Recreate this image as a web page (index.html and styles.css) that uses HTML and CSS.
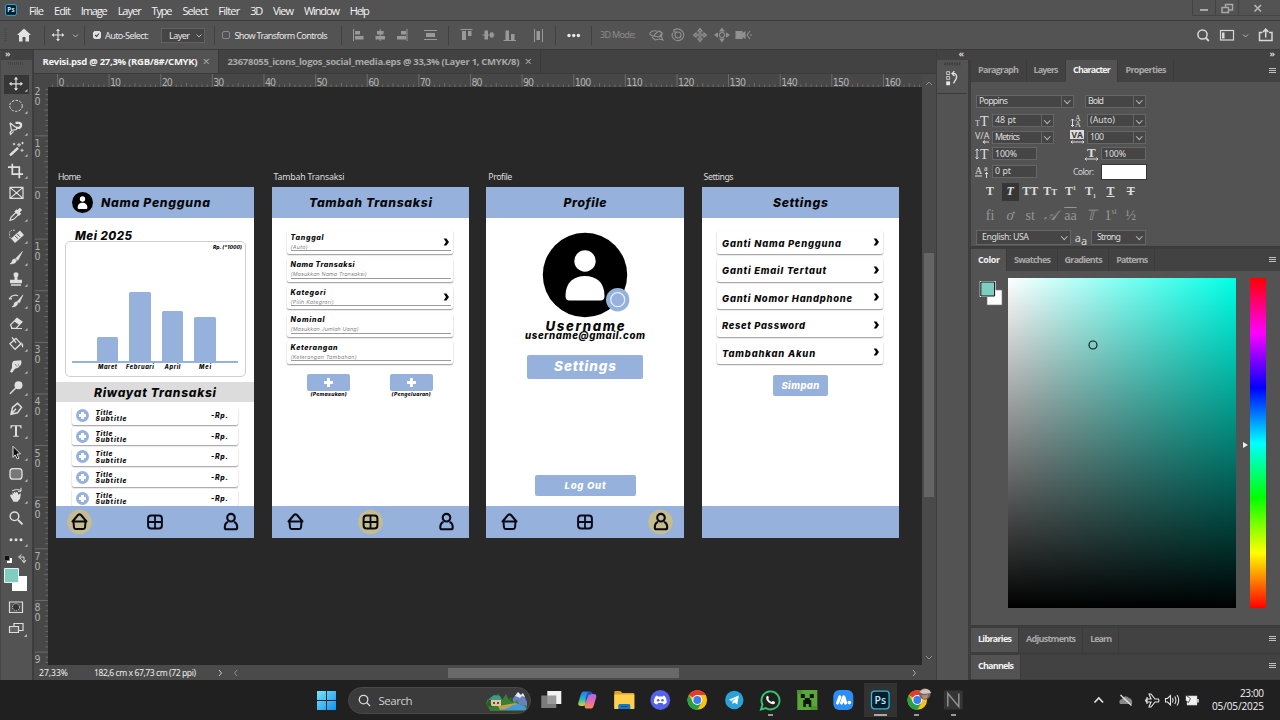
FILE: index.html
```html
<!DOCTYPE html>
<html lang="en">
<head>
<meta charset="utf-8">
<title>Revisi.psd</title>
<link rel="stylesheet" href="styles.css">
</head>
<body>
<svg width="0" height="0" class="defs">
  <defs>
    <g id="corner"><path d="M11.500 8V5.200L8.700 8z" fill="#bdbdbd"/></g>
    <g id="move" fill="none" stroke="#e0e0e0" stroke-width="1.200"><path d="M0-6V6M-6 0H6"/><path d="M0-7l2.200 2.600h-4.400zM0 7l2.200-2.600h-4.400zM-7 0l2.600-2.200v4.400zM7 0l-2.600-2.200v4.400z" fill="#e0e0e0" stroke="none"/></g>
    <g id="person"><circle cx="0" cy="-14" r="10.700"/><path d="M-19.500 21C-19.500 7-11 1 0 1s19.500 6 19.500 20c0 3-1.500 4.500-4 4.500h-31c-2.500 0-4-1.500-4-4.500z"/></g>
    <g id="nav-home" fill="none" stroke="#0a0a14" stroke-width="2" stroke-linejoin="round" stroke-linecap="round"><path d="M-7 0L-1.500-6.500q1.500-1.300 3 0L7 0zM-6 .5l.5 5.300q.3 1.700 2 1.700h7q1.700 0 2-1.700L6 .5"/></g>
    <g id="nav-add" fill="none" stroke="#0a0a14" stroke-width="2"><rect x="-6.900" y="-6.500" width="13.800" height="13" rx="3"/><path d="M0-6V6M-6.500 0H6.500" stroke-width="1.800"/></g>
    <g id="nav-user" fill="none" stroke="#0a0a14" stroke-width="2.100" stroke-linejoin="round"><circle cx="0" cy="-3.800" r="3.800"/><path d="M-3 .6C-5.500 1.400-6.200 3.700-6.200 6q0 1.800 1.700 1.800h9q1.700 0 1.700-1.800C6.200 3.700 5.500 1.400 3 .6"/></g>
    <g id="chev"><path d="M-2.300-3.500H.4L3 0 .4 3.500h-2.700L0 0z" fill="#050505"/></g>
    <g id="chrome"><circle r="9.800" fill="#fbc116"/><path d="M0 0L-8.500-4.900A9.800 9.800 0 0 1 8.500-4.900H0z" fill="#e33b2e"/><path d="M-8.500-4.900A9.800 9.800 0 0 0 0 9.800L4.500 2.200-4.200 2.400z" fill="#27a148"/><circle r="5" fill="#fff"/><circle r="3.900" fill="#3b7de9"/></g>
    <linearGradient id="win" x1="0" y1="0" x2="1" y2="1"><stop offset="0" stop-color="#7be2fb"/><stop offset="1" stop-color="#0d94ee"/></linearGradient>
    <linearGradient id="cop1" x1="0" y1="0" x2="0" y2="1"><stop offset="0" stop-color="#2a76e8"/><stop offset=".5" stop-color="#22b4c4"/><stop offset="1" stop-color="#dcd336"/></linearGradient>
    <linearGradient id="cop2" x1="0" y1="0" x2="0" y2="1"><stop offset="0" stop-color="#a06af0"/><stop offset=".5" stop-color="#e967b1"/><stop offset="1" stop-color="#f5924a"/></linearGradient>
  </defs>
</svg>

<header class="menubar">
  <svg class="pslogo" viewBox="0 0 12 12"><rect x=".6" y=".6" width="10.800" height="10.800" rx="1.500" fill="#001d2b" stroke="#35a8d0" stroke-width="1"/><text x="6" y="8.400" text-anchor="middle" font-size="6.500" font-weight="700" fill="#bfe8fa">Ps</text></svg>
  <nav class="menus">
    <span data-w="15">File</span><span data-w="17">Edit</span><span data-w="27">Image</span><span data-w="24">Layer</span><span data-w="21">Type</span><span data-w="26">Select</span><span data-w="22">Filter</span><span data-w="13">3D</span><span data-w="21">View</span><span data-w="36">Window</span><span data-w="20">Help</span>
  </nav>
  <svg class="winctl" viewBox="0 0 88 20"><path d="M.5 0v15.500H88M23.500 0v15M46.500 0v15" stroke="#444" fill="none"/><path d="M8 10h8" stroke="#a8a8a8" stroke-width="2"/><g fill="#535353" stroke="#a8a8a8" stroke-width="1.500"><rect x="33.500" y="4.500" width="7" height="5.500"/><rect x="30" y="7.500" width="6.500" height="5"/></g><path d="M62.500 5l6.500 6.500M69 5l-6.500 6.500" stroke="#b4b4b4" stroke-width="1.700"/></svg>
</header>

<div class="options">
  <svg class="opt-left" viewBox="0 0 85 28"><path d="M5.500 7v14" stroke="#464646" stroke-dasharray="1 1" stroke-width="2"/><path d="M24 7.500l7 6.500h-2v6.500h-3.500V16h-3v4.500H19V14h-2z" fill="#e2e2e2"/><path d="M44.500 5v19M84.500 5v19" stroke="#414141"/><use href="#move" transform="translate(58 14) scale(.9)"/><path d="M73 13.500l2.500 2.500 2.500-2.500" stroke="#b5b5b5" fill="none"/></svg>
  <i class="check on"><svg viewBox="0 0 8 8"><path d="M1.500 4l2 2 3-4" fill="none" stroke="#3a3a3a" stroke-width="1.500"/></svg></i>
  <span class="auto" data-w="44">Auto-Select:</span>
  <span class="select layer"><b data-w="21">Layer</b><svg viewBox="0 0 8 6"><path d="M1.500 1.500L4 4l2.500-2.500" fill="none" stroke="#b5b5b5"/></svg></span>
  <i class="bar"></i>
  <i class="check"></i>
  <span class="auto" data-w="93">Show Transform Controls</span>
  <svg class="opt-align" viewBox="341 0 253 28"><g stroke="#414141"><path d="M341.500 5v19M448.500 5v19M555.500 5v19M591.500 5v19"/></g><g fill="#999"><path d="M353 8h1v12h-1zM355 10h5v3.500h-5zM355 15h8.500v3.500H355z"/><path d="M379.700 8h1v12h-1zM377 10h6.500v3.500H377zM375.500 15H385v3.500h-9.500z"/><path d="M406.500 8h1v12h-1zM401 10h5v3.500h-5zM397 15h9v3.500h-9z"/><path d="M424 9h13v1h-13zM426 12h9v4h-9zM424 18h13v1h-13z"/><path d="M460.500 8h12v1h-12zM462 10h4v9h-4zM468 10h3.500v5H468z"/><path d="M482.500 13.500h12v1h-12zM484.500 9.500h3.500v9h-3.500zM490 11.500h3.500v5H490z"/><path d="M503.500 19H516v1h-12.500zM505.500 9.500h3.500V19h-3.500zM511 13h3.500v6H511z"/><path d="M534 8h1v13h-1zM542 8h1v13h-1zM536.500 10h3.500v9h-3.500z"/></g><g fill="#e8e8e8"><circle cx="569" cy="14.500" r="1.700"/><circle cx="573.700" cy="14.500" r="1.700"/><circle cx="578.400" cy="14.500" r="1.700"/></g></svg>
  <span class="mode" data-w="36">3D Mode:</span>
  <svg class="opt-3d" viewBox="644 0 112 28" fill="none" stroke="#919191" stroke-width="1.100"><path d="M654 15q-5-1-4-3 2-3 7-2M659 10q4 1 3 4-1 2-4 2M652 16l3 3 5-1 3 1-2-4M655 13l4-3 3 2-3 4-5-1z"/><circle cx="678" cy="14" r="3"/><path d="M674 9q5-3 9 2 2 4-1 7-5 4-9-1-2-3 0-5M674 8v3h3"/><path d="M700 7.500l2 2.500h-1.200v3.200h3.200V12l2.500 2-2.500 2v-1.200h-3.200V18h1.200l-2 2.500-2-2.500h1.200v-3.200H696V16l-2.500-2 2.500-2v1.200h3.200V10H698z"/><circle cx="722" cy="14" r="2.500"/><path d="M722 7.500l1.800 2.500h-3.600zM722 20.500l1.800-2.500h-3.600zM715 14l2.500-1.800v3.600zM729 14l-2.500-1.800v3.600z" fill="#919191"/><path d="M736 10.500h6v7h-6zM742 13l3-2v6l-3-2z" fill="#919191"/><path d="M750 10l-3 4 3 4M751 13v2"/></svg>
  <svg class="opt-right" viewBox="1190 0 90 28" fill="none" stroke="#d8d8d8"><circle cx="1202.500" cy="13.500" r="4.600" stroke-width="1.500"/><path d="M1205.800 17l3 3" stroke-width="1.800"/><rect x="1220.500" y="9.500" width="13" height="9.500" stroke-width="1.200"/><path d="M1222 11.500h2.500v6h-2.500z" fill="#d8d8d8" stroke="none"/><path d="M1243 13.500l2.500 2.500 2.500-2.500" stroke="#b5b5b5"/><path d="M1262.500 11.500h-3v8h12.500v-8h-3M1265.700 16.500V8.500m-2.700 2.500l2.700-2.800 2.700 2.800" stroke-width="1.500"/></svg>
</div>

<main class="workspace">
  <aside class="toolbox">
    <div class="strip">»</div>
    <div class="grip"></div>
    <div class="tools">
      <svg class="active" viewBox="-16 -10.800 32 21.600"><use href="#move"/><use href="#corner"/></svg>
      <svg viewBox="-16 -10.800 32 21.600"><ellipse rx="6.300" ry="5.500" fill="none" stroke="#d8d8d8" stroke-dasharray="2.500 1.300"/><use href="#corner"/></svg>
      <svg viewBox="-16 -10.800 32 21.600"><path d="M-6-5l4.500 3.500L2 .5M-6-5l1.500 7.500L1 1.500M-4.500 3q-2 1-1 3.500l3-3" fill="none" stroke="#d8d8d8" stroke-width="1.300"/><path d="M-.5-5h3.500q2.500.5 2 2.800T2 0H0" fill="none" stroke="#e0e0e0" stroke-width="2.300"/><use href="#corner"/></svg>
      <svg viewBox="-16 -10.800 32 21.600"><path d="M-6 6.500L2-1" stroke="#e0e0e0" stroke-width="2.600"/><path d="M3-6v4M1-4h4M6 0v3M4.500 1.500h3M-2-6v2.500M-3.200-4.800h2.500M6.500-7v2.500M5.300-5.800h2.500" stroke="#d8d8d8"/><use href="#corner"/></svg>
      <svg viewBox="-16 -10.800 32 21.600"><path d="M-8-3.700H3.300V7.500M-3.700-7V3.300H7" fill="none" stroke="#e0e0e0" stroke-width="1.700"/><use href="#corner"/></svg>
      <svg viewBox="-16 -10.800 32 21.600"><path d="M-6-5.500H7v11H-6zM-6-5.500L7 5.500M7-5.500L-6 5.500" fill="none" stroke="#e0e0e0" stroke-width="1.200"/></svg>
      <svg viewBox="-16 -10.800 32 21.600"><path d="M-6 6.500l1-3L1-2.500 3.500 0-2.500 5.500z" fill="none" stroke="#e0e0e0" stroke-width="1.200"/><path d="M-.5-3.500l4.500 4.500M2-2l3-3" stroke="#e0e0e0" stroke-width="3.200"/><use href="#corner"/></svg>
      <svg viewBox="-16 -10.800 32 21.600"><path d="M-3 5L6-3" stroke="#e0e0e0" stroke-width="6"/><path d="M-1 0l3 3M1-2l3 3" stroke="#555"/><path d="M-1-5.500q-6-1-5.500 4.500t3 3" fill="none" stroke="#d0d0d0" stroke-dasharray="1.500 1"/><use href="#corner"/></svg>
      <svg viewBox="-16 -10.800 32 21.600"><path d="M-6 6q2.500-1 2.500-4 2-2 4 .500Q0 6.500-6 6zM-.5 1L6.500-6.500 2 2.500z" fill="#e0e0e0" stroke="#e0e0e0" stroke-width=".5"/><use href="#corner"/></svg>
      <svg viewBox="-16 -10.800 32 21.600"><path d="M-2.500-5a2.700 2.700 0 0 1 5 0q0 2-1 3.500V1H6v3.500H-6V1h4.500v-2.500Q-2.500-3-2.500-5zM-5 5.500H5v1.300H-5z" fill="#e0e0e0"/><use href="#corner"/></svg>
      <svg viewBox="-16 -10.800 32 21.600"><path d="M-4 6q2.500-1 2.500-4 2-2 3.500 0Q1 6.500-4 6zM1 1L7-6 3.500 2z" fill="#e0e0e0" stroke="#e0e0e0" stroke-width=".5"/><path d="M-7-2l3-3M-7-2h3M2-5q-4-2-8 2" fill="none" stroke="#d8d8d8" stroke-width="1.200"/><use href="#corner"/></svg>
      <svg viewBox="-16 -10.800 32 21.600"><path d="M-5.500 2L1-4.500 6-1 0 5.500h-4z" fill="none" stroke="#e0e0e0" stroke-width="1.200"/><path d="M-2-1.500L1-4.500 6-1 3 2z" fill="#e0e0e0"/><path d="M-5 5.700H6" stroke="#e0e0e0"/><use href="#corner"/></svg>
      <svg viewBox="-16 -10.800 32 21.600"><path d="M-6 0L0-5.500 5 0-1 5.500zM-4-6.500L0-1" fill="none" stroke="#e0e0e0" stroke-width="1.300"/><path d="M5.500-2q2.500 3 1.500 6-2-1-1.500-6z" fill="#e0e0e0"/><use href="#corner"/></svg>
      <svg viewBox="-16 -10.800 32 21.600"><path d="M-4-1q0-4 3-4l6-.500q1 1 0 4.500L2 2l-3 1-3 4-2-1 2-4z" fill="#e0e0e0"/><path d="M-1-2l2 3M2-2l1 2" stroke="#666" stroke-width=".7"/><use href="#corner"/></svg>
      <svg viewBox="-16 -10.800 32 21.600"><circle cx="2.500" cy="-2.500" r="4" fill="#e0e0e0"/><path d="M-6 6L0 0" stroke="#e0e0e0" stroke-width="1.500"/><use href="#corner"/></svg>
      <svg viewBox="-16 -10.800 32 21.600"><path d="M-5 5.500l1.500-7 5-4 4 4-4 5.500zM-5 5.500L0 0M1-6l5 5" fill="none" stroke="#e0e0e0" stroke-width="1.500"/><use href="#corner"/></svg>
      <svg viewBox="-16 -10.800 32 21.600"><path d="M-5.500-5.500h11v3.200H4.700Q4.500-4.500 2.800-4.500H1V5h1.800v1h-5.600V5H-1v-9.500h-1.800q-1.700 0-1.900 2.200h-.8z" fill="#e0e0e0"/><use href="#corner"/></svg>
      <svg viewBox="-16 -10.800 32 21.600"><path d="M-3-6.500L4.500 1 1 1.300l2 4-1.800.8-2-4L-3 4.500z" fill="#111" stroke="#e0e0e0"/><use href="#corner"/></svg>
      <svg viewBox="-16 -10.800 32 21.600"><rect x="-6" y="-5.200" width="12" height="10.500" rx="3" fill="#777" stroke="#e0e0e0" stroke-width="1.300"/><use href="#corner"/></svg>
      <svg viewBox="-16 -10.800 32 21.600"><path d="M-5-1.500l1.500 1V-3.500L-2-2v-2l2 1 0-1 2 1v2L5-2.500 4 3 1.500 6h-4L-6 0z" fill="#e0e0e0"/><path d="M-4-5Q0-7.500 5-5.500M5-8v3.500H2" fill="none" stroke="#e0e0e0"/><use href="#corner"/></svg>
      <svg viewBox="-16 -10.800 32 21.600"><circle cx="-1.500" cy="-1.500" r="4.300" fill="none" stroke="#e0e0e0" stroke-width="1.400"/><path d="M2 2l4.500 4.500" stroke="#e0e0e0" stroke-width="2"/></svg>
      <svg viewBox="-16 -10.800 32 21.600"><g fill="#e0e0e0"><circle cx="-5" cy="1" r="1.500"/><circle cy="1" r="1.500"/><circle cx="5" cy="1" r="1.500"/></g><use href="#corner"/></svg>
    </div>
    <svg class="swatchset" viewBox="0 550 32 90"><path d="M7 558h5v5H7z" fill="#fff"/><path d="M4.500 555.500h5v5h-5z" fill="#111" stroke="#777" stroke-width=".6"/><path d="M20 557h4v5M21.500 554.500l-3 2.500 3 2.500M22 560l2 3 2-3" fill="none" stroke="#ddd"/><path d="M12 576h15v15H12z" fill="#fff"/><path d="M4.500 568.500h14v14h-14z" fill="#7fccc0" stroke="#eee"/><path d="M9.500 602h13v10.500h-13z" fill="none" stroke="#ddd" stroke-width="1.200"/><circle cx="16" cy="607.200" r="3.500" fill="#333" stroke="#ddd" stroke-dasharray="1.200 1"/><path d="M14 623.500h9v7h-9z" fill="#535353" stroke="#ddd" stroke-width="1.200"/><path d="M9.500 626.500h9v6h-9z" fill="#656565" stroke="#ddd" stroke-width="1.200"/><path d="M27 637v-3l-3 3z" fill="#bdbdbd"/></svg>
  </aside>

  <section class="document">
    <div class="tabs">
      <span class="tab current"><b data-w="155">Revisi.psd @ 27,3% (RGB/8#/CMYK)</b><em>×</em></span>
      <span class="tab"><b data-w="292">23678055_icons_logos_social_media.eps @ 33,3% (Layer 1, CMYK/8)</b><em>×</em></span>
    </div>
    <div class="view">
      <svg class="ruler-h" id="rulerH" viewBox="34 74 888 13"></svg>
      <svg class="ruler-v" id="rulerV" viewBox="34 87 14 578"></svg>
      <div class="canvas">
        <article class="board" id="home">
          <h2 data-w="23">Home</h2>
          <div class="screen">
            <div class="top user"><svg viewBox="-42 -42 84 84"><circle r="42"/><use href="#person" fill="#fff"/></svg><b data-w="109">Nama Pengguna</b></div>
            <b class="month" data-w="57">Mei 2025</b>
            <div class="chart">
              <b class="unit" data-w="29">Rp. (*1000)</b>
              <div class="bars"><i style="height:24px"></i><i style="height:69px"></i><i style="height:50px"></i><i style="height:44px"></i></div>
              <div class="months"><span><b data-w="19">Maret</b></span><span><b data-w="28">Februari</b></span><span><b data-w="16">April</b></span><span><b data-w="12">Mei</b></span></div>
            </div>
            <div class="history"><b data-w="122">Riwayat Transaksi</b></div>
            <ul class="rows">
              <li><i class="plus"></i><div><b data-w="17">Title</b><b data-w="31">Subtitle</b></div><b class="amt" data-w="17">-Rp.</b></li>
              <li><i class="plus"></i><div><b data-w="17">Title</b><b data-w="31">Subtitle</b></div><b class="amt" data-w="17">-Rp.</b></li>
              <li><i class="plus"></i><div><b data-w="17">Title</b><b data-w="31">Subtitle</b></div><b class="amt" data-w="17">-Rp.</b></li>
              <li><i class="plus"></i><div><b data-w="17">Title</b><b data-w="31">Subtitle</b></div><b class="amt" data-w="17">-Rp.</b></li>
              <li><i class="plus"></i><div><b data-w="17">Title</b><b data-w="31">Subtitle</b></div><b class="amt" data-w="17">-Rp.</b></li>
            </ul>
            <svg class="nav" viewBox="0 0 198 32"><circle cx="23.500" cy="16" r="12.300" fill="#c3bd91"/><use href="#nav-home" x="23.500" y="15.500"/><use href="#nav-add" x="99" y="16"/><use href="#nav-user" x="175" y="15.500"/></svg>
          </div>
        </article>

        <article class="board" id="add">
          <h2 data-w="71">Tambah Transaksi</h2>
          <div class="screen">
            <div class="top"><b data-w="123">Tambah Transaksi</b></div>
            <div class="cards">
              <div class="card"><b data-w="33">Tanggal</b><small data-w="17">(Auto)</small><svg viewBox="-4 -5 8 10"><use href="#chev"/></svg></div>
              <div class="card"><b data-w="64">Nama Transaksi</b><small data-w="76">(Masukkan Nama Transaksi)</small></div>
              <div class="card"><b data-w="35">Kategori</b><small data-w="43">(Pilih Kategrori)</small><svg viewBox="-4 -5 8 10"><use href="#chev"/></svg></div>
              <div class="card"><b data-w="34">Nominal</b><small data-w="68">(Masukkan Jumlah Uang)</small></div>
              <div class="card"><b data-w="47">Keterangan</b><small data-w="66">(Keterangan Tambahan)</small></div>
            </div>
            <div class="choices">
              <div><i class="cross"></i><b data-w="36">(Pemasukan)</b></div>
              <div><i class="cross"></i><b data-w="39">(Pengeluaran)</b></div>
            </div>
            <svg class="nav" viewBox="0 0 198 32"><circle cx="98.500" cy="16" r="12.300" fill="#c3bd91"/><use href="#nav-home" x="23.500" y="15.500"/><use href="#nav-add" x="98.500" y="16"/><use href="#nav-user" x="174.500" y="15.500"/></svg>
          </div>
        </article>

        <article class="board" id="profile">
          <h2 data-w="24">Profile</h2>
          <div class="screen">
            <div class="top"><b data-w="43">Profile</b></div>
            <svg class="avatar" viewBox="-43 -43 90 86"><circle r="42.200"/><use href="#person" fill="#fff"/><circle cx="32.700" cy="24.700" r="11.700" fill="#96b1dc"/><circle cx="32.700" cy="24.700" r="7" fill="none" stroke="#e9effa" stroke-width="1.200"/></svg>
            <b class="uname" data-w="79">Username</b>
            <b class="mail" data-w="120">username@gmail.com</b>
            <div class="btn big"><b data-w="62">Settings</b></div>
            <div class="btn out"><b data-w="41">Log Out</b></div>
            <svg class="nav" viewBox="0 0 198 32"><circle cx="174.500" cy="16" r="12.300" fill="#c3bd91"/><use href="#nav-home" x="23.500" y="15.500"/><use href="#nav-add" x="99" y="16"/><use href="#nav-user" x="175" y="15.500"/></svg>
          </div>
        </article>

        <article class="board" id="settings">
          <h2 data-w="30">Settings</h2>
          <div class="screen">
            <div class="top"><b data-w="55">Settings</b></div>
            <div class="cards menu">
              <div class="card"><b data-w="119">Ganti Nama Pengguna</b><svg viewBox="-4 -5 8 10"><use href="#chev"/></svg></div>
              <div class="card"><b data-w="104">Ganti Email Tertaut</b><svg viewBox="-4 -5 8 10"><use href="#chev"/></svg></div>
              <div class="card"><b data-w="130">Ganti Nomor Handphone</b><svg viewBox="-4 -5 8 10"><use href="#chev"/></svg></div>
              <div class="card"><b data-w="83">Reset Password</b><svg viewBox="-4 -5 8 10"><use href="#chev"/></svg></div>
              <div class="card"><b data-w="93">Tambahkan Akun</b><svg viewBox="-4 -5 8 10"><use href="#chev"/></svg></div>
            </div>
            <div class="btn save"><b data-w="38">Simpan</b></div>
            <div class="nav"></div>
          </div>
        </article>
      </div>
      <div class="vscroll"><svg viewBox="0 0 14 12"><path d="M4 9l3-3 3 3" fill="none" stroke="#8a8a8a"/></svg><i></i><svg viewBox="0 0 14 12"><path d="M4 4l3 3 3-3" fill="none" stroke="#8a8a8a"/></svg></div>
      <div class="status"><span data-w="29">27,33%</span><span class="size" data-w="102">182,6 cm x 67,73 cm (72 ppi)</span><svg class="ar1" viewBox="0 0 6 8"><path d="M2 1l2.500 3L2 7" fill="none" stroke="#ccc"/></svg><svg class="ar2" viewBox="0 0 6 8"><path d="M4 1L1.500 4 4 7" fill="none" stroke="#8a8a8a"/></svg><i></i><svg class="ar3" viewBox="0 0 6 8"><path d="M2 1l2.500 3L2 7" fill="none" stroke="#aaa"/></svg></div>
    </div>
  </section>

  <aside class="dock">
    <div class="strip">«</div>
    <svg viewBox="0 0 30 34"><path d="M7 4h17" stroke="#3c3c3c" stroke-width="3" stroke-dasharray="1.500 1"/><path d="M9.500 12h3v3h-3zM9.500 17h3v3h-3z" fill="none" stroke="#ccc"/><path d="M9 22h4v4H9z" fill="#e6e6e6"/><path d="M15.500 14h2.500q2.500 2 1.500 5l-3 5M17.500 11.500L15 14l2.500 2.500" fill="none" stroke="#ddd" stroke-width="1.400"/></svg>
  </aside>

  <aside class="panels">
    <div class="strip">»</div>
    <div class="ptabs t1"><span data-w="41">Paragraph</span><span data-w="25">Layers</span><span class="current" data-w="38">Character</span><span data-w="41">Properties</span><i class="burger"></i></div>
    <div class="character">
      <div class="crow r1"><span class="field dd f97"><b data-w="29">Poppins</b></span><span class="field dd f60 ml12"><b data-w="16">Bold</b></span></div>
      <div class="crow"><svg class="ci" viewBox="0 0 16 14"><text x="0" y="12" font-size="8">T</text><text x="5" y="12" font-size="14">T</text></svg><span class="field dd f62"><b data-w="21">48 pt</b></span><svg class="ci ml17" viewBox="0 0 16 14"><text x="5" y="6.500" font-size="8">A</text><text x="5" y="13" font-size="8">A</text><path d="M2.500 5v7M1 6.500L2.500 5 4 6.500M1 11l1.500 1.500L4 11" fill="none" stroke="#ddd"/></svg><span class="field dd f58"><b data-w="25">(Auto)</b></span></div>
      <div class="crow"><svg class="ci" viewBox="0 0 16 14"><text x="0" y="9" font-size="9" class="sans">V/A</text><path d="M8 12h6M10 10.500L8 12l2 1.500" fill="none" stroke="#ddd"/></svg><span class="field dd f62"><b data-w="25">Metrics</b></span><svg class="ci ml17" viewBox="0 0 16 14"><path d="M0 0h14v9H0z" fill="#ddd"/><text x="1.500" y="8" font-size="8.500" class="dark">VA</text><path d="M1 12h13M2.500 10.500L1 12l1.500 1.500M12.500 10.500L14 12l-1.500 1.500" fill="none" stroke="#ddd"/></svg><span class="field dd f58"><b data-w="14">100</b></span></div>
      <div class="crow"><svg class="ci" viewBox="0 0 16 14"><text x="5" y="12" font-size="14">T</text><path d="M2 2v10M.5 3.500L2 2l1.500 1.500M.5 10.500L2 12l1.500-1.500" fill="none" stroke="#ddd"/></svg><span class="field f45"><b data-w="22">100%</b></span><svg class="ci ml47" viewBox="0 0 16 14"><text x="3" y="10" font-size="13" font-weight="700">T</text><path d="M1 12h13M2.500 10.500L1 12l1.500 1.500M12.500 10.500L14 12l-1.500 1.500" fill="none" stroke="#ddd"/></svg><span class="field f45"><b data-w="22">100%</b></span></div>
      <div class="crow r5"><svg class="ci" viewBox="0 0 16 14"><text x="0" y="9" font-size="10">A</text><text x="9" y="6" font-size="8">a</text><path d="M0 11h7M11.500 7v6M10 9l1.500-1.500L13 9" fill="none" stroke="#ddd"/></svg><span class="field f45"><b data-w="16">0 pt</b></span><span class="clabel" data-w="21">Color:</span><i class="cswatch"></i></div>
      <div class="glyphs"><b>T</b><b class="sel"><em>T</em></b><b>TT</b><b>T<small>T</small></b><b>T<sup>1</sup></b><b>T<sub>1</sub></b><b><u>T</u></b><b><s>T</s></b></div>
      <div class="glyphs dim"><span>fi</span><span><em>ơ</em></span><span>st</span><span><em>𝒜</em></span><span class="over">aa</span><span><em>𝕋</em></span><span>1<sup>st</sup></span><span>½</span></div>
      <div class="crow last"><span class="field dd plain f94"><b data-w="47">English: USA</b></span><span class="aa">a<sub>a</sub></span><span class="field dd plain f54"><b data-w="24">Strong</b></span></div>
    </div>
    <div class="ptabs t2"><span class="current" data-w="22">Color</span><span data-w="37">Swatches</span><span data-w="38">Gradients</span><span data-w="32">Patterns</span><i class="burger"></i></div>
    <div class="colorpanel">
      <svg class="fgbg" viewBox="0 0 25 28"><path d="M8 10h15v15H8z" fill="#fff" stroke="#777" stroke-width=".6"/><path d="M.7 1h16v16H.7z" fill="#fff"/><path d="M1.800 2h13.800v14H1.800z" fill="#7fccc0" stroke="#111"/></svg>
      <div class="field2d"><svg viewBox="0 0 12 12"><circle cx="6" cy="6" r="4" fill="none" stroke="#111" stroke-width="1.100"/></svg></div>
      <div class="hue"><svg viewBox="0 0 6 8"><path d="M0 1l5 3-5 3z" fill="#eee"/></svg></div>
    </div>
    <div class="ptabs t3"><span class="current" data-w="34">Libraries</span><span data-w="50">Adjustments</span><span data-w="22">Learn</span><i class="burger"></i></div>
    <div class="ptabs t4"><span class="current" data-w="36">Channels</span><i class="burger"></i></div>
  </aside>
</main>

<footer class="taskbar">
  <svg class="winlogo" viewBox="0 0 20 20"><path d="M0 0h9.500v9.500H0zM10.500 0H20v9.500h-9.500zM0 10.500h9.500V20H0zM10.500 10.500H20V20h-9.500z" fill="url(#win)"/></svg>
  <div class="search"><svg class="mag" viewBox="0 0 14 14"><circle cx="6" cy="6" r="4.600"/><path d="M9.500 9.500l3.500 3.500"/></svg><span data-w="34">Search</span>
    <svg class="scene" viewBox="0 0 42 20"><path d="M24 11l8-10 3 3 2-2 4 9v5H24z" fill="#6882bd"/><path d="M29 5l3-4 3 3 2-2 2 4-3-1-2 2-2-1z" fill="#e3e9f7"/><path d="M0 13l2-6 2 5 2-6 2 4 4-8 4 7 4-6 3 6 2-3 3 6 3-3 2 4 8 2v5l-36 1z" fill="#3b7d35"/><path d="M12 15l18-3 6 3-2 3-20 1z" fill="#c4a24b"/><path d="M13 19q9-1 14-5l6-1q8 2 7 6z" fill="#4598da"/><path d="M3 8l5-4 6 1 2 4H3z" fill="#3a9d86"/><path d="M5 9h10v6H5z" fill="#e0c4a0"/><path d="M7 11h2v2H7zM11 11h2v2h-2z" fill="#6f4934"/><path d="M0 15l3-7 3 8zM24 10l1.500-5 2 6z" fill="#25602c"/></svg></div>
  <div class="apps">
    <svg viewBox="-18 -18 36 36"><path d="M-4-9H10V4H-4z" fill="#f2f2f2"/><path d="M-10-4.500H5V8h-15z" fill="#8c8c8c" opacity=".85"/></svg>
    <svg viewBox="-18 -18 36 36"><path d="M-4-8.500h5q2 0 1.500 2L-.500 3q-1 3-4 3h-2q-3 0-2.500-3l2.500-8.500q1-3 2.500-3z" fill="url(#cop1)"/><path d="M4 8.500H-1q-2 0-1.500-2L.500-3q1-3 4-3h2q3 0 2.500 3L6.500 5.500q-1 3-2.500 3z" fill="url(#cop2)"/><path d="M1-8.500h2q2 0 2.500 2.500h-4L0-2l-2 6 .500-7z" fill="#234fb0"/></svg>
    <svg viewBox="-18 -18 36 36"><path d="M-10-8q0-1 1-1h5l2 2h11q1 0 1 1V9h-20z" fill="#e2a220"/><path d="M-10-5.500h20V8q0 1-1 1H-9q-1 0-1-1z" fill="#ffd04f"/><path d="M-6 9V5.500Q-6 4-4.500 4h9Q6 4 6 5.500V9z" fill="#1477c8"/><path d="M-3 6.500h6" stroke="#0b4e8e"/></svg>
    <svg viewBox="-18 -18 36 36"><circle r="9.900" fill="#5562ea"/><path d="M-3.500-4.500l1.200 1h4.600l1.200-1Q6-3.500 6.500 2.500 5 4.300 3 4.500L2.200 3h-4.400L-3 4.500Q-5 4.300-6.500 2.500-6-3.500-3.500-4.500z" fill="#fff"/><circle cx="-2.200" cy=".3" r="1.300" fill="#5562ea"/><circle cx="2.200" cy=".3" r="1.300" fill="#5562ea"/></svg>
    <svg viewBox="-18 -18 36 36"><use href="#chrome"/></svg>
    <svg viewBox="-18 -18 36 36"><circle r="9.200" fill="#2aa1d8"/><path d="M-5.500-.2L4.500-4.500 3 4.500l-3-2-1.700 1.800L-2 1.500l4-3.700-5 3.200z" fill="#fff"/></svg>
    <svg viewBox="-18 -18 36 36" class="run"><path d="M-9.300 9.500l1.500-5A9 9 0 1 1-4.600 8z" fill="#202020" stroke="#36c46c" stroke-width="1.900"/><path d="M-3.500-4q1-1 1.800.8.600 1.500-.3 2.200Q-.5 1.500 1.300 2 2.300.5 3.500 1.300 5.500 2 4.500 3.500 2.500 5.500-1.500 2.500-5.500-1-3.500-4z" fill="#f4f4f4"/></svg>
    <svg viewBox="-18 -18 36 36"><path d="M-10-10H10V10H-10z" fill="#5aa63a"/><path d="M-10-10h5v4h-5zM3 6h7v4H3z" fill="#4a9430"/><path d="M-6.500-6h4v4h-4zM2.500-6h4v4h-4zM-2.500-2h5v2H4v7H1.500V4h-3v3H-4V0h1.500z" fill="#0a140a"/></svg>
    <svg viewBox="-18 -18 36 36"><rect x="-10" y="-10" width="20" height="20" rx="6" fill="#2c8df6"/><path d="M-5.700 3l2.200-6M-1.700 3l2.200-6L2.300 3" fill="none" stroke="#fff" stroke-width="3.200" stroke-linejoin="round" stroke-linecap="round"/><circle cx="6" cy="2.600" r="1.800" fill="#fff"/></svg>
    <svg viewBox="-18 -18 36 36" class="run front"><rect x="-8.800" y="-8.800" width="17.600" height="17.600" rx="3" fill="#001d2b" stroke="#35b5d8" stroke-width="1.300"/><text y="4" text-anchor="middle" font-size="10.500" font-weight="600">Ps</text></svg>
    <svg viewBox="-18 -18 36 36" class="run"><use href="#chrome"/><circle cx="7.500" cy="-6" r="5.800" fill="#75655d"/><path d="M2-8q4-5 10-2l2 3-8 1z" fill="#d0c7c0"/><path d="M4-5q4 1 7-1l-1 4-4 1z" fill="#b58a74"/></svg>
    <svg viewBox="-18 -18 36 36" class="run"><rect x="-9.500" y="-9.500" width="19" height="19" fill="#343434"/><path d="M-5.500 6.500v-13L5.500 6.500v-13" fill="none" stroke="#8b8b8b" stroke-width="1.600"/></svg>
  </div>
  <svg class="tray" viewBox="1090 680 112 40" fill="none" stroke="#e6e6e6" stroke-width="1.300"><path d="M1094.500 702.500l4.300-4.500 4.300 4.500" stroke-width="1.600"/><path d="M1120 704q-2-4 2-5 3-5 7-1 4 1 3 6z" fill="#888" stroke="none"/><path d="M1120.500 695l11 10.500"/><path d="M1145.500 700.500l1-1.500h4.500l-2-5h2l4 5h3.500l.5 1.500-.5 1.500h-3.500l-4 5h-2l2-5h-4.500zM1147 697v7" stroke-width="1.100"/><path d="M1165.500 698.500h2l3-3v9.500l-3-3h-2zM1172.500 698q1.300 2.200 0 4.500M1174.700 696.500q2.500 3.700 0 7.500M1177 695q3.500 5 0 10.500" stroke-width="1.100"/><path d="M1187.500 696.500h9v8h-9z" fill="#f2f2f2"/><path d="M1198 699v3.500" stroke-width="1.600"/><path d="M1185.500 695l5 3.500-2 4-3-2z" fill="#f2f2f2" stroke="#202020" stroke-width=".7"/></svg>
  <div class="clock"><span data-w="24">23:00</span><span data-w="52">05/05/2025</span></div>
</footer>
<script src="app.js"></script>
</body>
</html>
```
FILE: styles.css
```css
* { box-sizing: border-box; }
html, body { margin: 0; width: 1280px; height: 720px; overflow: hidden; }
body { display: flex; flex-direction: column; background: #535353; color: #d6d6d6; font: 10px/1 "Open Sans", "Noto Sans", sans-serif; }
svg { display: block; flex: none; }
svg text { font-family: "Liberation Serif", serif; fill: #ddd; }
i, em { font-style: normal; }
b { font-weight: inherit; }
[data-w] { white-space: nowrap; display: inline-block; }
.defs { position: absolute; }

/* menu bar */
.menubar { display: flex; align-items: center; height: 21px; flex: none; border-bottom: 1px solid #3a3a3a; padding-left: 5px; }
.pslogo { width: 12px; height: 12px; }
.pslogo text, .apps text { font-family: "Open Sans", sans-serif; fill: #bfe8fa; }
.menus { display: flex; gap: 9.900px; margin-left: 12px; font-size: 11px; color: #f4f4f4; }
.winctl { width: 88px; height: 20px; margin-left: auto; }

/* options bar */
.options { display: flex; align-items: center; height: 29px; flex: none; border-bottom: 1px solid #3a3a3a; font-family: "Noto Sans", sans-serif; font-size: 9.100px; color: #e6e6e6; }
.opt-left { width: 85px; height: 28px; margin-right: 7.500px; }
.check { width: 8px; height: 8px; border: 1px solid #8a8a8a; border-radius: 2px; flex: none; }
.check.on { background: #e0e0e0; border-color: #e0e0e0; }
.check svg { width: 6px; height: 6px; }
.auto { margin-left: 4.500px; padding-top: 1px; }
.layer { display: flex; justify-content: space-between; align-items: center; width: 44px; height: 15px; margin-left: 12px; padding: 1px 1px 0 7px; background: #454545; border: 1px solid #626262; }
.layer svg { width: 8px; height: 6px; }
.bar { width: 1px; height: 19px; background: #414141; margin: 0 7.500px 0 8.500px; }
.opt-align { width: 253px; height: 28px; margin-left: 14px; }
.mode { color: #8c8c8c; margin-left: 5.500px; }
.opt-3d { width: 112px; height: 28px; margin-left: 8px; }
.opt-right { width: 90px; height: 28px; margin-left: auto; }

/* workspace */
.workspace { display: flex; height: 630px; flex: none; background: #3d3d3d; }
.strip { height: 10px; background: #424242; color: #d6d6d6; font: 700 9px/7px "Open Sans", sans-serif; flex: none; }

.toolbox { width: 32px; background: #535353; border-left: 1px solid #474747; display: flex; flex-direction: column; margin-right: 2px; }
.toolbox .strip { padding-left: 4px; }
.grip { width: 16px; height: 3px; margin: 2px 0 8.200px 7px; background: repeating-linear-gradient(90deg, #444 0 1px, #535353 1px 2px); }
.tools { display: flex; flex-direction: column; }
.tools svg { width: 32px; height: 21.680px; margin-left: -1px; }
.tools .active { background: linear-gradient(#363636, #363636) 4px center / 25px 19px no-repeat; }
.swatchset { width: 32px; height: 90px; margin-left: -1px; }

.document { width: 902px; display: flex; flex-direction: column; }
.tabs { height: 24px; background: #424242; display: flex; border-bottom: 1px solid #3b3b3b; font: 700 9.500px/1 "Open Sans", sans-serif; color: #a9a9a9; }
.tab { display: flex; align-items: center; padding: 0 8px 0 8.500px; border-right: 1px solid #3a3a3a; }
.tab em { font: 400 13px/1 "Open Sans", sans-serif; margin-left: 5px; }
.tab.current { background: #535353; color: #f4f4f4; }
.tab.current em { color: #aaa; }
.view { display: grid; grid-template: "rh sb" 13px "cv sb" 578px "st st" 15px / 888px 14px; position: relative; }
.ruler-h { grid-area: rh; width: 888px; height: 13px; background: #474747; }
.ruler-v { grid-area: cv; width: 14px; height: 578px; background: #474747; }
.ruler-h text, .ruler-v text { font: 10.500px "DejaVu Sans Condensed", "DejaVu Sans", sans-serif; fill: #b2b2b2; }
.canvas { grid-area: cv; margin-left: 14px; background: #282828; position: relative; overflow: hidden; }
.vscroll { grid-area: sb; background: #4a4a4a; display: flex; flex-direction: column; align-items: center; padding: 2px 0; }
.vscroll svg { width: 14px; height: 12px; }
.vscroll i { width: 10px; height: 244px; flex: none; margin: 165px 0 155px; background: #656565; }
.status { grid-area: st; background: #4a4a4a; display: flex; align-items: center; padding-left: 5px; font: 8.600px/1 "Noto Sans", sans-serif; color: #ececec; }
.status span { padding-top: 1px; }
.status .size { margin-left: 26px; }
.status svg { width: 6px; height: 8px; }
.status .ar1 { margin-left: 21px; }
.status .ar2 { margin-left: 10px; }
.status i { width: 231px; height: 10px; margin-left: 209px; background: #696969; }
.status .ar3 { margin-left: 232px; }

/* artboards */
.board { position: absolute; top: 83px; width: 198px; }
#home { left: 8px; }
#add { left: 223.600px; width: 197.600px; }
#profile { left: 438.300px; width: 197.600px; }
#settings { left: 653.600px; width: 197.600px; }
.board h2 { margin: 0 0 4px 2px; height: 13px; font: 8.800px/14px "Noto Sans", sans-serif; color: #dcdcdc; }
.screen { height: 351px; background: #fff; color: #080808; display: flex; flex-direction: column; position: relative; overflow: hidden; font-family: Inter, "Open Sans", sans-serif; font-weight: 800; font-style: italic; font-feature-settings: "cv11"; }
.top { height: 31px; flex: none; background: #96b1dc; display: flex; align-items: center; justify-content: center; font-size: 12.200px; }
.top b { padding-top: 2px; }
.user { justify-content: flex-start; padding-left: 16px; gap: 8px; }
.user svg { width: 21px; height: 21px; }
.nav { position: absolute; left: 0; bottom: 0; width: 198px; height: 32px; background: #96b1dc; }
.month { margin: 12px 0 0 19px; height: 11px; font-size: 11.500px; line-height: 12px; align-self: flex-start; }
.chart { margin-left: 8.500px; width: 181px; height: 136px; flex: none; border: 1px solid #cfcfcf; border-radius: 5px; display: flex; flex-direction: column; }
.unit { align-self: flex-end; margin: 2px 0 0; font-size: 5px; line-height: 6px; position: relative; right: 2.500px; }
.bars { display: flex; align-items: flex-end; gap: 11px; height: 113px; margin: 0 6.500px 0 6px; padding-left: 25px; border-bottom: 2px solid #96b1dc; }
.bars i { width: 21.500px; background: #96b1dc; border-radius: 1.500px 1.500px 0 0; }
.months { display: flex; gap: .500px; padding-left: 26px; font-size: 5.700px; line-height: 8px; }
.months span { width: 32px; display: flex; justify-content: center; }
.history { height: 20px; flex: none; margin-top: 5px; padding-top: 1px; background: #dcdcdc; display: flex; align-items: center; justify-content: center; font-size: 12px; }
.rows { list-style: none; margin: 4.500px 16px 0 15.500px; padding: 0; display: flex; flex-direction: column; gap: 2.700px; }
.rows li { height: 18px; flex: none; background: #fff; border-radius: 2px; box-shadow: 0 1px 1.500px rgba(0,0,0,.4); display: flex; align-items: center; padding: 0 10px 0 4.500px; font-size: 6.600px; line-height: 6.200px; }
.rows div { margin: 1.500px 0 0 6.500px; display: flex; flex-direction: column; align-items: flex-start; }
.amt { margin: 1px 0 0 auto; font-size: 7px; }
.plus { width: 13px; height: 13px; border-radius: 50%; background: linear-gradient(#fff,#fff) center/7px 3px no-repeat, linear-gradient(#fff,#fff) center/3px 7px no-repeat, #96b1dc; }

.cards { display: flex; flex-direction: column; gap: 4.500px; margin: 13px 16px 0 15.500px; }
.card { height: 23px; flex: none; background: #fff; border-radius: 2px; box-shadow: 0 1px 1.500px rgba(0,0,0,.42); position: relative; padding: 1.500px 3px 0 3.500px; display: flex; flex-direction: column; align-items: flex-start; font-size: 7.100px; line-height: 9px; }
.card small { font-size: 5.300px; line-height: 9px; height: 8.500px; margin-top: 1px; font-weight: 400; color: #858585; }
#add .card::after { content: ""; width: 160px; height: 1px; flex: none; margin-top: -1px; background: #9b9b9b; }
.card svg { position: absolute; right: 3px; top: 6px; width: 8px; height: 10px; }
.menu .card { padding: 1px 3px 0 5px; justify-content: center; font-size: 9.400px; line-height: 11px; }
.choices { display: flex; justify-content: space-between; margin: 10px 36.500px 0 35.500px; }
.choices div { width: 43px; display: flex; flex-direction: column; align-items: center; font-size: 5px; line-height: 6px; }
.cross { width: 43px; height: 17px; border-radius: 2px; background: linear-gradient(#fff,#fff) center/9px 3px no-repeat, linear-gradient(#fff,#fff) center/3px 9px no-repeat, #96b1dc; }
.avatar { width: 90px; height: 86px; margin: 14px 0 0 55.500px; }
.uname { align-self: center; margin-top: 1.500px; font-size: 13.200px; line-height: 13px; }
.mail { align-self: center; font-size: 9.700px; line-height: 10px; margin-top: -2px; }
.btn { background: #96b1dc; border-radius: 2px; color: #fff; display: flex; align-items: center; justify-content: center; align-self: center; flex: none; }
.big { width: 116px; height: 24px; margin-top: 14px; font-size: 13.500px; }
.out { width: 101px; height: 21px; margin-top: 96px; font-size: 9.600px; padding-top: 1px; }
.save { width: 55px; height: 21px; margin-top: 11px; font-size: 9.500px; }

/* side dock */
.dock { width: 31px; margin-left: 1px; background: #535353; }
.dock .strip { text-align: right; padding-right: 4px; }
.dock svg { width: 30px; height: 34px; border-bottom: 1px solid #3a3a3a; }
.panels { width: 312px; padding-left: 3px; display: flex; flex-direction: column; }
.panels .strip { margin-left: -3px; text-align: right; padding-right: 5px; }
.ptabs { display: flex; height: 22px; flex: none; background: #424242; color: #a8a8a8; font: 700 9px/20px "Open Sans", sans-serif; }
.ptabs span { box-sizing: content-box; padding: 0 6.400px 0 7px; border-right: 1px solid #3b3b3b; }
.t1 span { padding-right: 7.300px; }
.t3 span { padding-right: 6.800px; }
.ptabs .current { background: #535353; color: #f2f2f2; }
.burger { margin: 8px 4.500px 0 auto; width: 7px; height: 5px; border-top: 1px solid #c0c0c0; border-bottom: 1px solid #c0c0c0; background: linear-gradient(#c0c0c0,#c0c0c0) center/7px 1px no-repeat; }
.character { height: 165px; background: #535353; padding: 11.500px 0 0 4px; display: flex; flex-direction: column; border-bottom: 1px solid #3a3a3a; }
.crow { display: flex; align-items: center; height: 16.600px; flex: none; }
.crow.r1 { height: 16px; padding-left: 1px; margin-bottom: 3px; }
.crow.r5 { margin-top: 1px; }
.field { display: flex; align-items: center; height: 13px; padding-left: 2px; background: #454545; border: 1px solid #666; font: 8.800px/1 "Noto Sans", sans-serif; color: #dedede; flex: none; }
.dd { background: linear-gradient(#666,#666) right 11px top/1px 100% no-repeat, #454545; }
.dd::after { content: ""; margin: -2px 3.500px 0 auto; width: 3.500px; height: 3.500px; border: solid #bbb; border-width: 0 1px 1px 0; transform: rotate(45deg); }
.dd.plain { background: #454545; padding-left: 5px; }
.f97 { width: 98px; } .f60 { width: 61px; } .f62 { width: 62px; } .f58 { width: 59px; } .f45 { width: 45px; } .f94 { width: 95px; } .f54 { width: 55px; }
.ml12 { margin-left: 11px; }
.ci { width: 16px; height: 14px; margin-right: 1px; }
.ml17 { margin-left: 16px; }
.ml47 { margin-left: 47px; }
.ci .sans { font-family: "Open Sans", sans-serif; }
.ci .dark { fill: #3a3a3a; font-weight: 700; font-family: "Open Sans", sans-serif; }
.clabel { font: 8.800px/1 "Noto Sans", sans-serif; color: #cfcfcf; margin-left: 36px; padding-top: 1px; }
.cswatch { width: 46px; height: 16px; background: #fff; border: 1px solid #333; margin-left: 6.500px; }
.glyphs { display: flex; height: 20px; flex: none; margin: 2.500px 0 0 5px; font-family: "Liberation Serif", serif; font-size: 12px; color: #dedede; }
.glyphs > * { width: 20.100px; height: 19px; line-height: 19px; text-align: center; font-weight: 700; white-space: nowrap; }
.glyphs > .sel { background: linear-gradient(#363636,#363636) center/17px 18px no-repeat; }
.glyphs em { font-style: italic; }
.glyphs sup, .glyphs sub { font-size: 6px; line-height: 0; }
.glyphs small { font-size: 9px; }
.glyphs.dim { margin-top: 3.500px; color: #969696; font-size: 14px; }
.glyphs.dim > * { font-weight: 400; }
.dim sup { font-size: 8px; }
.over { text-decoration: overline; }
.crow.last { padding-left: 1px; margin-top: 3px; }
.crow.last .field { height: 15px; }
.aa { width: 20px; text-align: center; font: 11px/1 "Noto Sans", sans-serif; }
.aa sub { font-size: 11px; line-height: 0; }
.t2 { margin-top: 2px; line-height: 22px; }
.colorpanel { height: 355px; background: #535353; display: flex; padding: 7px 0 0 8px; border-bottom: 1px solid #3a3a3a; }
.fgbg { width: 25px; height: 28px; margin-top: 2px; }
.field2d { width: 228px; height: 330px; margin-left: 4px; background: linear-gradient(transparent, #000), linear-gradient(90deg, #fff, #00ffe6); }
.field2d svg { width: 12px; height: 12px; margin: 61px 0 0 79px; }
.hue { width: 16px; height: 330px; margin-left: 14px; background: linear-gradient(#f00, #f0f 16.600%, #00f 33.300%, #0ff 50%, #0f0 66.600%, #ff0 83.300%, #f00); }
.hue svg { width: 6px; height: 8px; margin: 163px 0 0 -7px; }
.t3, .t4 { margin-top: 2px; height: 24px; line-height: 22px; }
.t4 { margin-top: 3px; }

/* taskbar */
.taskbar { height: 40px; flex: none; background: #202020; display: flex; align-items: center; padding-left: 316.500px; }
.winlogo { width: 19px; height: 19px; margin-right: 12px; }
.search { width: 183px; height: 27px; border-radius: 14px; background: #3b3b3b; border: 1px solid #494949; display: flex; align-items: center; padding-left: 9px; font-size: 11.500px; color: #cfcfcf; overflow: hidden; }
.search span { padding-top: 1px; }
.mag { width: 13px; height: 13px; fill: none; stroke: #d8d8d8; stroke-width: 1.400; margin-right: 8px; }
.scene { width: 42px; height: 20px; margin: 2px 2px 0 auto; }
.apps { display: flex; margin-left: 2.200px; }
.apps svg { width: 36.600px; height: 36px; }
.apps .run { background: linear-gradient(#999,#999) center bottom 2px/5px 2px no-repeat; }
.apps .front { background: linear-gradient(#aaa,#aaa) center bottom 2px/13px 2px no-repeat, linear-gradient(#323232,#323232) center/33px 34px no-repeat; }
.tray { width: 112px; height: 40px; margin-left: 118px; }
.clock { margin-left: auto; padding-right: 16px; display: flex; flex-direction: column; align-items: flex-end; gap: 2px; font: 10px/11px "Open Sans", sans-serif; color: #f4f4f4; }
```
FILE: app.js
```js
// Track each label out to its design width.
document.querySelectorAll('[data-w]').forEach(function (el) {
  var style = getComputedStyle(el);
  var pad = parseFloat(style.paddingLeft) + parseFloat(style.paddingRight) + parseFloat(style.borderRightWidth);
  var isTab = el.parentElement.classList.contains('ptabs');
  var natural = el.getBoundingClientRect().width - pad;
  var n = el.textContent.length;
  var step = (Number(el.dataset.w) - natural) / (n - 1);
  el.style.letterSpacing = step + 'px';
  if (!isTab) el.style.marginRight = -step + 'px';
});

// Rulers: one labelled tick per 10 cm, minor ticks between.
var PITCH = 51.62;
function ruler(id, from, to, origin, vertical) {
  var ticks = '', labels = '';
  for (var k = -3; k <= 18; k++) {
    var p = origin + k * PITCH;
    for (var m = 0; m < 10; m++) {
      var q = p + m * PITCH / 10;
      if (q < from || q > to) continue;
      var len = m === 0 ? 13 : m === 5 ? 4 : 2.5;
      ticks += vertical
        ? '<path d="M' + (48 - len) + ' ' + q + 'H48"/>'
        : '<path d="M' + q + ' ' + (87 - len) + 'V87"/>';
    }
    var text = String(Math.abs(k) * 10);
    if (vertical) {
      text.split('').forEach(function (d, i) {
        var y = p + 11 + i * 10;
        if (y > from + 7 && y < to) labels += '<text x="34.5" y="' + y + '">' + d + '</text>';
      });
    } else if (k >= 0 && k <= 16) {
      labels += '<text x="' + (p + 1) + '" y="85.500" textLength="' + text.length * 5.5 + '">' + text + '</text>';
    }
  }
  document.getElementById(id).innerHTML = '<g stroke="#757575" stroke-width=".8">' + ticks + '</g>' + labels;
}
ruler('rulerH', 48, 922, 57.5, false);
ruler('rulerV', 87, 665, 187.5, true);
```
